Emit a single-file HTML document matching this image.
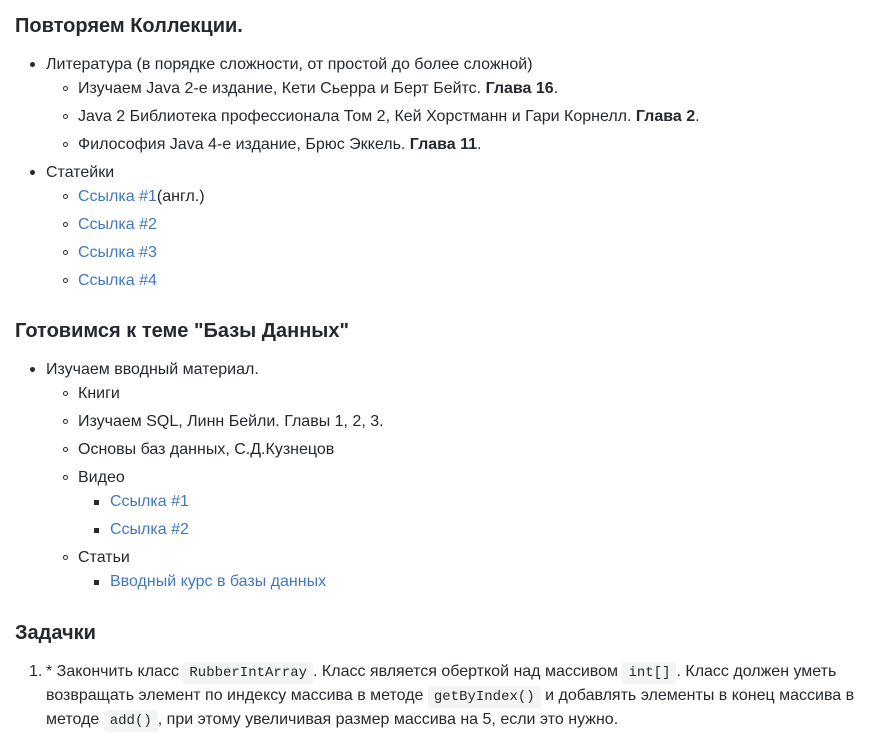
<!DOCTYPE html>
<html><head><meta charset="utf-8"><style>
body{margin:0;width:875px;height:729px;background:#fff;color:#24292e;font-family:"Liberation Sans",Arial,sans-serif;font-size:16px;position:relative;overflow:hidden}
.l{position:absolute;line-height:24px;white-space:nowrap}
h2{position:absolute;left:15px;margin:0;font-size:20px;line-height:24px;font-weight:bold}
a{color:#4078c0;text-decoration:none}
.d1::before,.d2::before,.d3::before{content:"";position:absolute;top:9px}
.d1::before{left:-16px;width:5px;height:5px;border-radius:50%;background:#24292e}
.d2::before{left:-15px;width:3px;height:3px;border-radius:50%;border:1px solid #24292e}
.d3::before{left:-16px;width:5px;height:5px;background:#24292e;top:10px}
code{font-family:"Liberation Mono",monospace;font-size:14px;background:#f3f4f4;border-radius:3px;padding:3px 6px}
</style></head><body>
<h2 style="top:14px">Повторяем Коллекции.</h2>
<div class="l d1" style="left:46px;top:53px">Литература (в порядке сложности, от простой до более сложной)</div>
<div class="l d2" style="left:78px;top:77px">Изучаем Java 2-е издание, Кети Сьерра и Берт Бейтс. <b>Глава 16</b>.</div>
<div class="l d2" style="left:78px;top:105px">Java 2 Библиотека профессионала Том 2, Кей Хорстманн и Гари Корнелл. <b>Глава 2</b>.</div>
<div class="l d2" style="left:78px;top:133px">Философия Java 4-е издание, Брюс Эккель. <b>Глава 11</b>.</div>
<div class="l d1" style="left:46px;top:161px">Статейки</div>
<div class="l d2" style="left:78px;top:185px"><a>Ссылка #1</a>(англ.)</div>
<div class="l d2" style="left:78px;top:213px"><a>Ссылка #2</a></div>
<div class="l d2" style="left:78px;top:241px"><a>Ссылка #3</a></div>
<div class="l d2" style="left:78px;top:269px"><a>Ссылка #4</a></div>
<h2 style="top:319px">Готовимся к теме "Базы Данных"</h2>
<div class="l d1" style="left:46px;top:358px">Изучаем вводный материал.</div>
<div class="l d2" style="left:78px;top:382px">Книги</div>
<div class="l d2" style="left:78px;top:410px">Изучаем SQL, Линн Бейли. Главы 1, 2, 3.</div>
<div class="l d2" style="left:78px;top:438px">Основы баз данных, С.Д.Кузнецов</div>
<div class="l d2" style="left:78px;top:466px">Видео</div>
<div class="l d3" style="left:110px;top:490px"><a>Ссылка #1</a></div>
<div class="l d3" style="left:110px;top:518px"><a>Ссылка #2</a></div>
<div class="l d2" style="left:78px;top:546px">Статьи</div>
<div class="l d3" style="left:110px;top:570px"><a>Вводный курс в базы данных</a></div>
<h2 style="top:621px">Задачки</h2>
<div class="l" style="left:29px;top:660px">1.</div>
<div class="l" style="left:46px;top:660px">* Закончить класс <code>RubberIntArray</code>. Класс является оберткой над массивом <code>int[]</code>. Класс должен уметь</div>
<div class="l" style="left:46px;top:684px">возвращать элемент по индексу массива в методе <code>getByIndex()</code> и добавлять элементы в конец массива в</div>
<div class="l" style="left:46px;top:708px">методе <code>add()</code>, при этому увеличивая размер массива на 5, если это нужно.</div>
</body></html>
